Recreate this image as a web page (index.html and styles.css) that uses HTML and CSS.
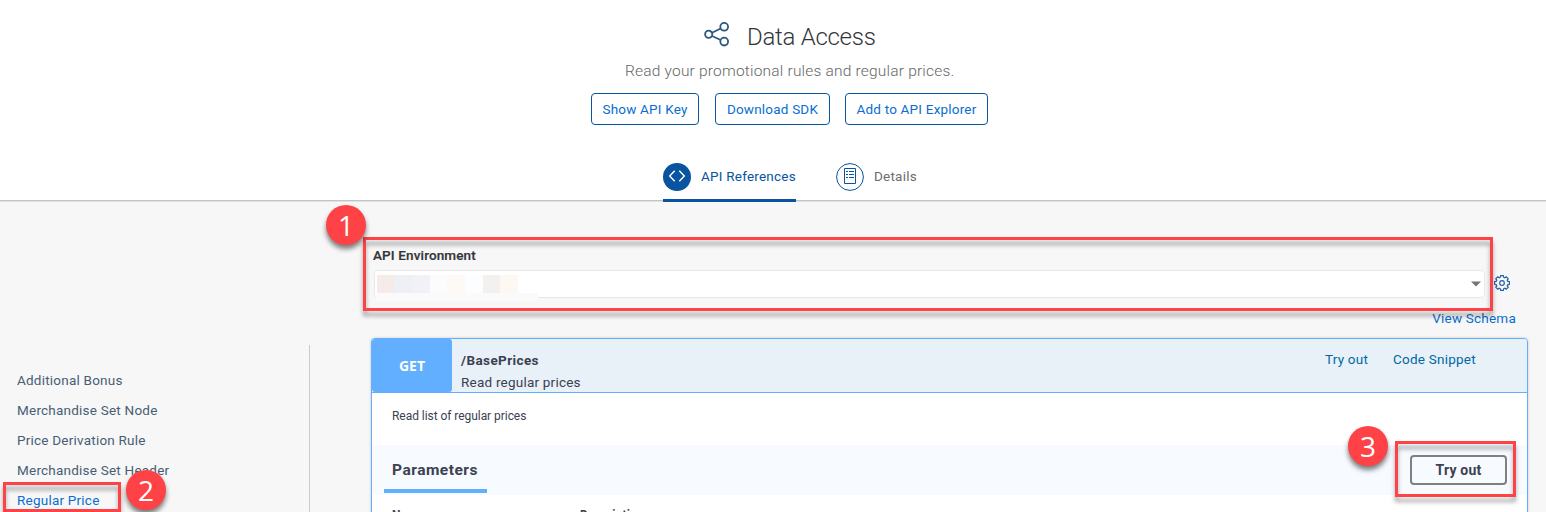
FILE: index.html
```html
<!DOCTYPE html>
<html lang="en">
<head>
<meta charset="utf-8">
<title>Data Access</title>
<link rel="stylesheet" href="styles.css">
</head>
<body>
<header class="header">
  <div class="title-row">
    <svg class="share" width="26" height="26" viewBox="0 0 26 26" fill="none" stroke="#2b587c" stroke-width="1.8"><circle cx="4.7" cy="13.3" r="3.6"/><circle cx="20.2" cy="5.8" r="3.9"/><circle cx="20.2" cy="20.6" r="3.9"/><path d="M8 11.7l8.7-4.2M8 15l8.7 4"/></svg>
    <h1 class="title">Data Access</h1>
  </div>
  <p class="subtitle">Read your promotional rules and regular prices.</p>
  <div class="actions">
    <button class="btn btn-key">Show API Key</button>
    <button class="btn btn-sdk">Download SDK</button>
    <button class="btn btn-add">Add to API Explorer</button>
  </div>
  <nav class="tabs">
    <a class="tab tab-active">
      <svg class="tab-icon" width="28" height="28" viewBox="0 0 28 28" fill="none"><circle cx="14" cy="14" r="14" fill="#0854a0"/><path d="M11.7 7.8L6.7 13l5 5.2M16.3 7.8l5 5.2-5 5.2" stroke="#fff" stroke-width="1.4"/></svg>
      <span>API References</span>
    </a>
    <a class="tab">
      <svg class="tab-icon" width="28" height="28" viewBox="0 0 28 28" fill="none" stroke="#0854a0"><circle cx="14" cy="14" r="13.4"/><path d="M8.5 5.5h11v15h-11z"/><path d="M10 8.5h2M13 8.5h5M10 11.5h2M13 11.5h5M10 14.5h2M13 14.5h5"/></svg>
      <span>Details</span>
    </a>
  </nav>
</header>
<main class="main">
  <aside class="sidebar">
    <a class="item">Additional Bonus</a>
    <a class="item">Merchandise Set Node</a>
    <a class="item">Price Derivation Rule</a>
    <a class="item">Merchandise Set Header</a>
    <a class="item item-active">Regular Price</a>
  </aside>
  <section class="content">
    <div class="env">
      <label class="env-label">API Environment</label>
      <div class="env-row">
        <div class="select">
          <div class="mosaic"><i class="m1"></i><i class="m2"></i><i class="m3"></i><i class="m4"></i><i class="m5"></i><i class="m6"></i><i class="m7"></i><i class="m8"></i></div>
          <i class="mosaic-base"></i>
          <svg width="10" height="6" viewBox="0 0 10 6"><path d="M0 .5h10L5 5.5z" fill="#757575"/></svg>
        </div>
        <svg class="gear" width="18" height="18" viewBox="-9 -9 18 18" fill="none" stroke="#2460a5" stroke-width="1.2"><path d="M-1.3-7.4H1.3L1.8-5.6 2.9-5.2 4.3-6.2 6.2-4.3 5.2-2.9 5.6-1.8 7.4-1.3V1.3L5.6 1.8 5.2 2.9 6.2 4.3 4.3 6.2 2.9 5.2 1.8 5.6 1.3 7.4H-1.3L-1.8 5.6-2.9 5.2-4.3 6.2-6.2 4.3-5.2 2.9-5.6 1.8-7.4 1.3V-1.3L-5.6-1.8-5.2-2.9-6.2-4.3-4.3-6.2-2.9-5.2-1.8-5.6z"/><circle r="2.3"/></svg>
      </div>
    </div>
    <a class="schema">View Schema</a>
    <article class="op">
      <div class="op-head">
        <span class="method">GET</span>
        <div class="op-text"><b class="path">/BasePrices</b><span>Read regular prices</span></div>
        <a class="op-link">Try out</a>
        <a class="op-link op-code">Code Snippet</a>
      </div>
      <p class="desc">Read list of regular prices</p>
      <div class="params">
        <h2 class="params-title">Parameters</h2>
        <button class="try">Try out</button>
      </div>
      <div class="cols"><b class="col-name">Name</b><b>Description</b></div>
    </article>
  </section>
</main>
<div class="mark mark-env"></div>
<div class="mark mark-price"></div>
<div class="mark mark-try"></div>
<span class="pin pin-1">1</span>
<span class="pin pin-2">2</span>
<span class="pin pin-3">3</span>
</body>
</html>
```
FILE: styles.css
```css
* { box-sizing: border-box; }
body { margin: 0; width: 1546px; height: 512px; overflow: hidden; position: relative; background: #f7f7f7; font: 13.5px/20px Roboto, "Liberation Sans", sans-serif; letter-spacing: .22px; white-space: nowrap; }
h1, h2, p { margin: 0; font-weight: 400; }

.header { height: 202px; padding-top: 20px; background: linear-gradient(#fff 0 200px, #c4c4c4 200px 201px, #e2e2e2 201px); }
.title-row { display: flex; height: 34px; padding-left: 704px; }
.share { margin-top: 1px; }
.title { margin-left: 17px; font-size: 24px; line-height: 35px; font-weight: 300; color: #32363a; letter-spacing: -.27px; }
.subtitle { margin-top: 7px; padding-left: 625px; font-size: 15.5px; font-weight: 300; color: #666; letter-spacing: .2px; }
.actions { display: flex; margin-top: 12px; padding-left: 591px; }
.btn { height: 32px; padding: 0; border: 1px solid #0854a0; border-radius: 4px; background: #fff; font: inherit; letter-spacing: .2px; color: #0a6ed1; }
.btn-key { width: 108px; }
.btn-sdk { width: 115px; margin-left: 16px; }
.btn-add { width: 143px; margin-left: 15px; }
.tabs { display: flex; gap: 40px; margin-top: 38px; padding-left: 663px; }
.tab { display: flex; height: 39px; gap: 10px; line-height: 27px; color: #6a6d70; }
.tab-icon { flex: none; }
.tab-active { width: 133px; color: #0854a0; border-bottom: 3px solid #0854a0; }

.main { display: flex; height: 310px; }
.sidebar { display: flex; flex-direction: column; width: 310px; margin-top: 143px; padding: 20px 0 0 17px; border-right: 1px solid #ccc; }
.item { height: 30px; flex: none; line-height: 30px; color: #475e75; }
.item-active { color: #0a6ed1; }
.content { width: 1218px; padding-left: 61px; }
.env { height: 96px; padding: 43px 0 0 3px; }
.env-label { display: block; height: 20px; font-weight: 500; color: #32363a; letter-spacing: .14px; margin-left: -1px; -webkit-text-stroke: .2px #32363a; }
.env-row { display: flex; align-items: center; gap: 8px; margin-top: 5px; }
.gear { margin-top: -2px; }
.select { display: flex; align-items: center; position: relative; width: 1111px; height: 28px; padding: 0 3px 0 2px; justify-content: space-between; border: 1px solid #e8e8e8; border-radius: 4px; background: #fff; }
.mosaic { display: flex; }
.mosaic i { width: 17.6px; height: 18px; }
.m1 { background: #f5ebe9; } .m2 { background: #edf1f5; } .m3 { background: #f2f1f7; } .m4 { background: #fcfcfd; }
.m5 { background: #fdf9f5; } .m6 { background: #fbfdfe; } .m7 { background: #f2f1ef; } .m8 { background: #fdf9f2; }
.mosaic-base { position: absolute; left: 1px; top: 22px; width: 162px; height: 8px; background: #fafafa; }
.schema { display: block; width: 1145px; margin-top: 10px; text-align: right; color: #0a6ed1; }
.op { display: flex; flex-direction: column; width: 1157px; height: 200px; margin-top: 10px; border: 1px solid #61affe; border-radius: 4px; background: #fff; box-shadow: 0 0 3px rgba(0,0,0,.19); color: #3b4151; }
.op-head { display: flex; height: 54px; border-bottom: 1px solid #61affe; border-radius: 3px 3px 0 0; background: #e8f0f8; }
.method { width: 80px; border-radius: 3px; background: #61affe; color: #fff; font: 700 14px/54px "Open Sans", sans-serif; text-align: center; letter-spacing: 0; }
.op-text { display: flex; flex-direction: column; width: 873px; padding: 10px 0 0 9px; line-height: 22px; }
.path { letter-spacing: .4px; }
.op-link { margin-top: 10px; color: #0069a5; }
.op-code { margin-left: 25px; }
.desc { height: 52px; padding: 13px 0 0 20px; font-size: 12px; letter-spacing: -.05px; }
.params { display: flex; justify-content: space-between; height: 50px; padding: 0 20px 0 11.5px; background: #f7faff; }
.params-title { width: 103px; height: 48px; padding-left: 8.5px; border-bottom: 4px solid #61affe; font-size: 15.5px; font-weight: 700; line-height: 50px; letter-spacing: .5px; }
.try { width: 97px; height: 30px; margin-top: 10px; padding: 0; border: 2px solid #808080; border-radius: 4px; background: transparent; font: 700 14px Roboto, sans-serif; letter-spacing: .2px; color: #3b4151; }
.cols { display: flex; padding: 10px 0 0 20px; font-size: 12px; }
.col-name { width: 188px; }

.mark { position: absolute; border: 3px solid #fe4245; filter: drop-shadow(0 5px 2px rgba(0,0,0,.35)); }
.mark-env { left: 363px; top: 237px; width: 1130px; height: 74px; }
.mark-price { left: 3px; top: 482px; width: 118px; height: 30px; }
.mark-try { left: 1395px; top: 441px; width: 121px; height: 56px; }
.pin { position: absolute; width: 40px; height: 40px; border-radius: 50%; background: #fe4245; color: #fff; font: 28px/41px "Open Sans", sans-serif; text-align: center; letter-spacing: 0; box-shadow: 0 4px 5px rgba(0,0,0,.5); }
.pin-1 { left: 326px; top: 205px; }
.pin-2 { left: 126px; top: 470px; }
.pin-3 { left: 1348px; top: 426px; }
```
